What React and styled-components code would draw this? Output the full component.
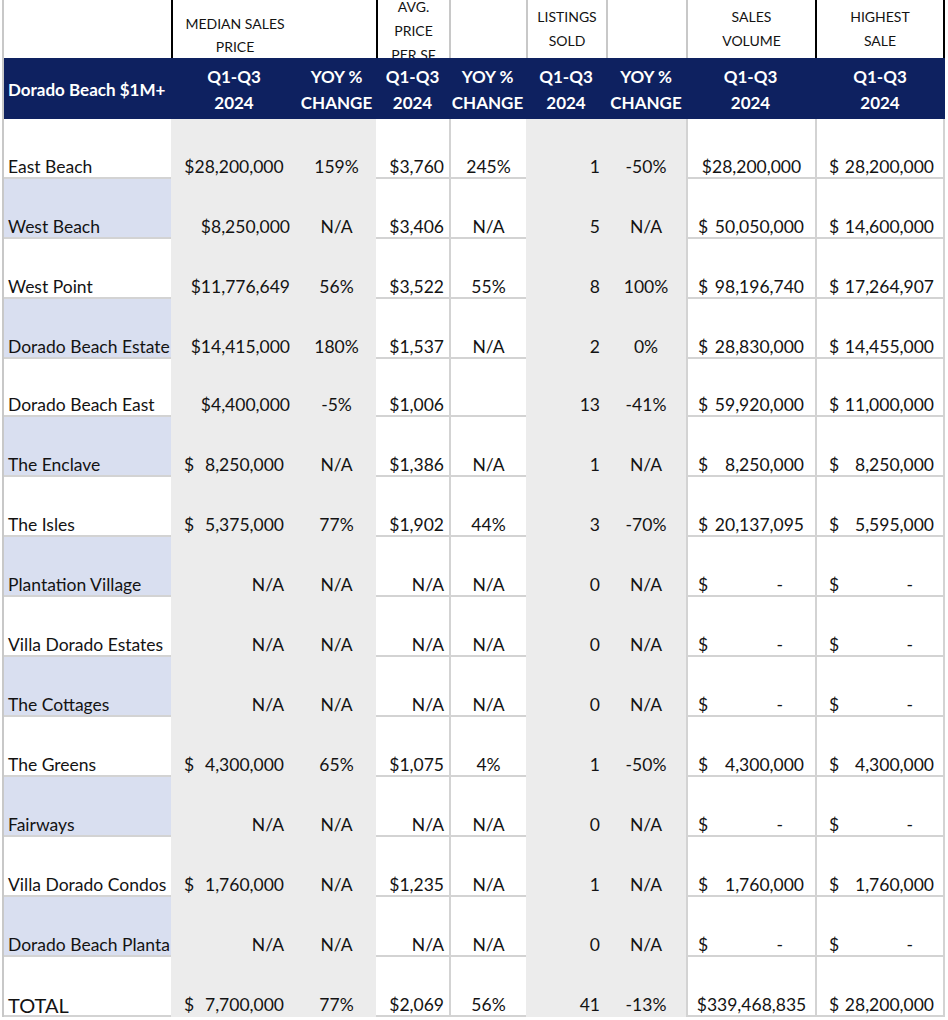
import React from 'react';
import styled, { createGlobalStyle } from 'styled-components';

const NAVY = '#0e2160';
const SHADE = '#ececec';
const LAV = '#d9dff0';
const RULE = '#d3d3d3';
const COLS = '167px 126px 79px 73px 77px 80px 80px 129px 130px';

const GlobalStyle = createGlobalStyle`
  body {
    margin: 0;
    background: #fff;
    font-family: Lato, "Open Sans", sans-serif;
    color: #131313;
  }
`;

const Sheet = styled.div`
  margin-left: 2px;
  border-left: 2px solid #c8c8c8;
  width: 941px;
`;

const HeadRow = styled.div`
  display: grid;
  grid-template-columns: ${COLS};
  height: 58px;
`;

const HeadCell = styled.div`
  display: flex;
  flex-direction: column;
  align-items: center;
  justify-content: ${p => (p.$end ? 'flex-end' : 'center')};
  padding-top: ${p => p.$shift || 0}px;
  border-left: 2px solid ${p => p.$line || 'transparent'};
  border-right: ${p => (p.$last ? '2px solid #000' : 'none')};
  font-size: 14px;
  line-height: ${p => p.$lh || 24}px;
  text-transform: uppercase;
  text-align: center;
  overflow: hidden;
`;

const Band = styled.div`
  display: grid;
  grid-template-columns: ${COLS};
  height: 61px;
  background: ${NAVY};
  color: #fff;
  font-weight: 700;
  font-size: 17px;
`;

const BandCell = styled.div`
  display: flex;
  flex-direction: column;
  justify-content: center;
  align-items: ${p => (p.$left ? 'flex-start' : 'center')};
  padding: 3px 0 0 ${p => (p.$left ? 4 : 0)}px;
  line-height: 26px;
  text-align: center;
  white-space: nowrap;
`;

const Row = styled.div`
  display: grid;
  grid-template-columns: ${COLS};
  height: ${p => p.$h}px;
`;

const justify = { left: 'flex-start', center: 'center', right: 'flex-end', split: 'space-between' };

const Cell = styled.div`
  display: flex;
  align-items: flex-end;
  justify-content: ${p => justify[p.$align]};
  background: ${p => p.$bg || '#fff'};
  border-bottom: 2px solid ${p => (p.$rule ? RULE : 'transparent')};
  border-left: ${p => (p.$edge ? `2px solid ${RULE}` : 'none')};
  border-right: ${p => (p.$end ? `2px solid ${RULE}` : 'none')};
  padding: 0 ${p => p.$pr || 0}px 0 ${p => p.$pl || 0}px;
  font-size: ${p => (p.$big ? 20 : 17.5)}px;
  line-height: 20px;
  white-space: nowrap;
  overflow: hidden;
`;

const acc = v => ({ kind: 'acc', v });
const mid = v => ({ kind: 'mid', v });
const DASH = { kind: 'dash' };
const NA = { kind: 'pad', v: 'N/A' };

const columns = [
  { key: 'med', align: 'right', pr: 7, bg: SHADE, accL: 13, accR: 13 },
  { key: 'y1', align: 'center', bg: SHADE },
  { key: 'avg', align: 'right', pr: 5, rule: true },
  { key: 'y2', align: 'center', rule: true, edge: true },
  { key: 'list', align: 'right', pr: 6, bg: SHADE },
  { key: 'y3', align: 'center', bg: SHADE },
  { key: 'vol', align: 'right', pr: 11, rule: true, edge: true, accL: 10, accR: 11, dashR: 32 },
  { key: 'high', align: 'right', pr: 9, rule: true, edge: true, end: true, accL: 12, accR: 9, dashR: 30 },
];

const empty = {
  med: NA, y1: 'N/A', avg: 'N/A', y2: 'N/A', list: '0', y3: 'N/A', vol: DASH, high: DASH,
};

const rows = [
  { name: 'East Beach', med: mid('$28,200,000'), y1: '159%', avg: '$3,760', y2: '245%', list: '1', y3: '-50%', vol: mid('$28,200,000'), high: acc('28,200,000') },
  { name: 'West Beach', med: '$8,250,000', y1: 'N/A', avg: '$3,406', y2: 'N/A', list: '5', y3: 'N/A', vol: acc('50,050,000'), high: acc('14,600,000') },
  { name: 'West Point', med: '$11,776,649', y1: '56%', avg: '$3,522', y2: '55%', list: '8', y3: '100%', vol: acc('98,196,740'), high: acc('17,264,907') },
  { name: 'Dorado Beach Estate', med: '$14,415,000', y1: '180%', avg: '$1,537', y2: 'N/A', list: '2', y3: '0%', vol: acc('28,830,000'), high: acc('14,455,000') },
  { name: 'Dorado Beach East', h: 58, med: '$4,400,000', y1: '-5%', avg: '$1,006', y2: '', list: '13', y3: '-41%', vol: acc('59,920,000'), high: acc('11,000,000') },
  { name: 'The Enclave', med: acc('8,250,000'), y1: 'N/A', avg: '$1,386', y2: 'N/A', list: '1', y3: 'N/A', vol: acc('8,250,000'), high: acc('8,250,000') },
  { name: 'The Isles', med: acc('5,375,000'), y1: '77%', avg: '$1,902', y2: '44%', list: '3', y3: '-70%', vol: acc('20,137,095'), high: acc('5,595,000') },
  { name: 'Plantation Village', ...empty },
  { name: 'Villa Dorado Estates', ...empty },
  { name: 'The Cottages', ...empty },
  { name: 'The Greens', med: acc('4,300,000'), y1: '65%', avg: '$1,075', y2: '4%', list: '1', y3: '-50%', vol: acc('4,300,000'), high: acc('4,300,000') },
  { name: 'Fairways', ...empty },
  { name: 'Villa Dorado Condos', med: acc('1,760,000'), y1: 'N/A', avg: '$1,235', y2: 'N/A', list: '1', y3: 'N/A', vol: acc('1,760,000'), high: acc('1,760,000') },
  { name: 'Dorado Beach Planta', ...empty },
  { name: 'TOTAL', total: true, med: acc('7,700,000'), y1: '77%', avg: '$2,069', y2: '56%', list: '41', y3: '-13%', vol: mid('$339,468,835'), high: acc('28,200,000') },
];

const ValueCell = ({ col, value }) => {
  const base = { $bg: col.bg, $rule: col.rule, $edge: col.edge, $end: col.end };
  if (value && value.kind === 'acc') {
    return (
      <Cell {...base} $align="split" $pl={col.accL} $pr={col.accR}>
        <span>$</span>
        <span>{value.v}</span>
      </Cell>
    );
  }
  if (value && value.kind === 'dash') {
    return (
      <Cell {...base} $align="split" $pl={col.accL} $pr={col.dashR}>
        <span>$</span>
        <span>-</span>
      </Cell>
    );
  }
  if (value && value.kind === 'mid') {
    return <Cell {...base} $align="center">{value.v}</Cell>;
  }
  if (value && value.kind === 'pad') {
    return <Cell {...base} $align="right" $pr={col.accR}>{value.v}</Cell>;
  }
  return <Cell {...base} $align={col.align} $pr={col.pr}>{value}</Cell>;
};

const bandLabels = ['Q1-Q3|2024', 'YOY %|CHANGE', 'Q1-Q3|2024', 'YOY %|CHANGE', 'Q1-Q3|2024', 'YOY %|CHANGE', 'Q1-Q3|2024', 'Q1-Q3|2024'];

const Lines = ({ text }) => text.split('|').map(t => <span key={t}>{t}</span>);

export default function App() {
  return (
    <>
      <GlobalStyle />
      <Sheet>
        <HeadRow>
          <HeadCell />
          <HeadCell $line="#000" $end $lh={23}>
            <Lines text="Median Sales|Price" />
          </HeadCell>
          <HeadCell />
          <HeadCell $line="#000" $lh={24} $shift={4}>
            <Lines text="Avg.|Price|Per SF" />
          </HeadCell>
          <HeadCell $line="#c8c8c8" />
          <HeadCell $line="#c8c8c8">
            <Lines text="Listings|Sold" />
          </HeadCell>
          <HeadCell $line="#c8c8c8" />
          <HeadCell $line="#c8c8c8">
            <Lines text="Sales|Volume" />
          </HeadCell>
          <HeadCell $line="#000" $last>
            <Lines text="Highest|Sale" />
          </HeadCell>
        </HeadRow>

        <Band>
          <BandCell $left>Dorado Beach $1M+</BandCell>
          {bandLabels.map((l, i) => (
            <BandCell key={i}>
              <Lines text={l} />
            </BandCell>
          ))}
        </Band>

        {rows.map((r, i) => (
          <Row key={r.name} $h={r.h || 60}>
            <Cell $bg={i % 2 === 1 ? LAV : '#fff'} $rule $align="left" $pl={4} $big={r.total}>
              {r.name}
            </Cell>
            {columns.map(col => (
              <ValueCell key={col.key} col={col} value={r[col.key]} />
            ))}
          </Row>
        ))}
      </Sheet>
    </>
  );
}
